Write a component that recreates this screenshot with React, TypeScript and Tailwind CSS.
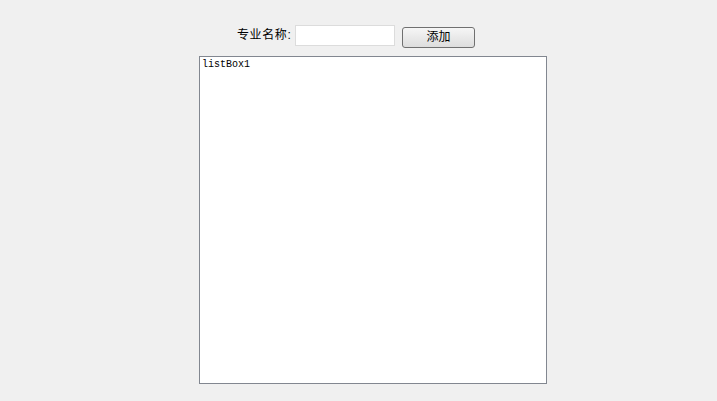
import React from 'react';

export default function App() {
  return (
    <div className="w-[717px] h-[401px] bg-[#f0f0f0] overflow-hidden" style={{ fontFamily: '"Liberation Sans", "Noto Sans CJK SC", sans-serif' }}>
      <div className="flex items-start pt-[25px] pl-[237px]">
        <span className="w-[58px] text-[12px] tracking-[0.6px] leading-[20px] text-black">专业名称:</span>
        <input className="w-[100px] h-[21px] bg-white border border-[#dcdcdc] outline-none text-[12px] px-1" />
        <button className="ml-[7px] mt-[2px] w-[73px] h-[21px] rounded-[3px] border border-[#707070] bg-gradient-to-b from-[#f6f6f6] to-[#dddddd] text-[12px] leading-[19px] text-black">
          添加
        </button>
      </div>
      <div className="ml-[199px] mt-[8px] w-[348px] h-[328px] bg-white border border-[#828790]">
        <div className="pl-[2px] pt-[1px] text-[10px] leading-[14px] text-black" style={{ fontFamily: '"Liberation Mono", monospace' }}>
          listBox1
        </div>
      </div>
    </div>
  );
}
